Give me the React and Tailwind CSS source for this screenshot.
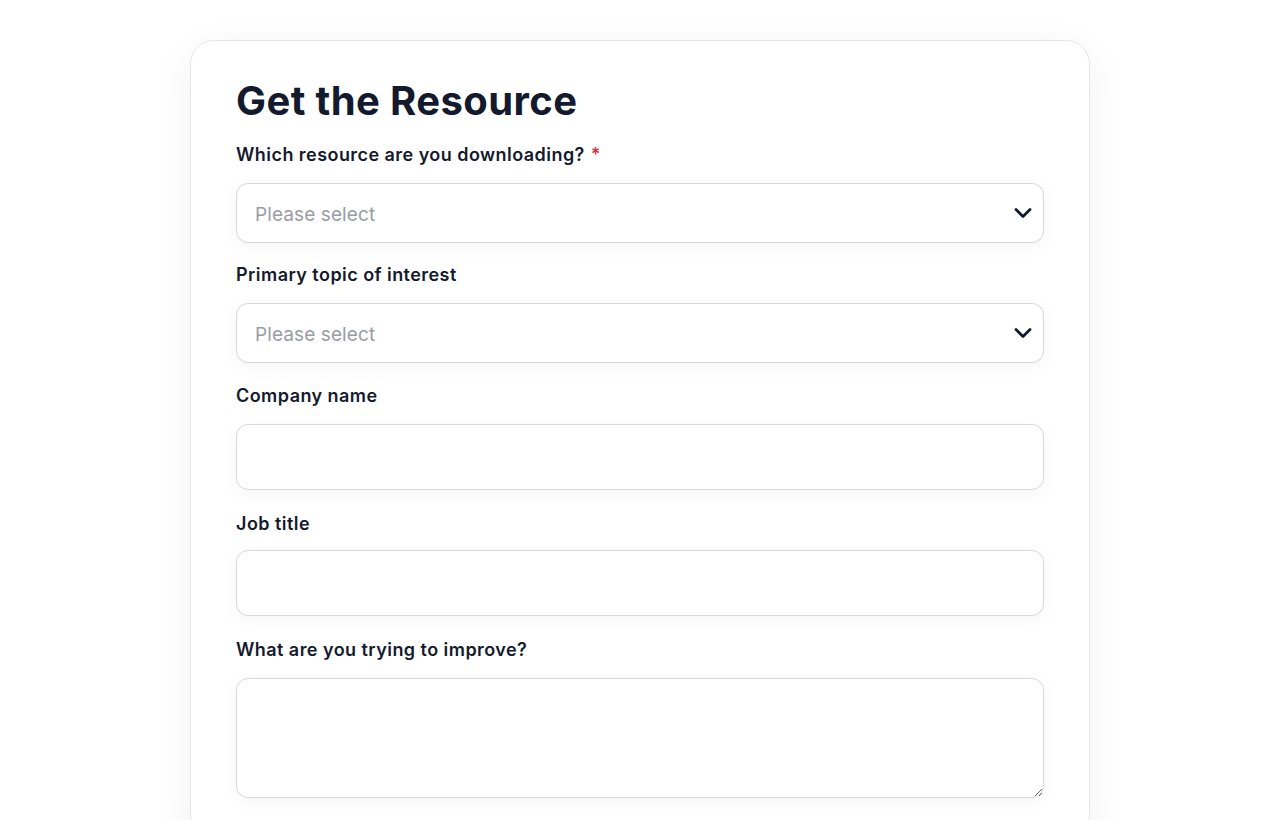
import { ChevronDown } from 'lucide-react'

const font = { fontFamily: 'Inter, "Noto Sans", Arial, sans-serif' }

function Label({ children, required }) {
  return (
    <label className="block text-[18px] font-semibold leading-[27px] tracking-[0.45px] text-[#141a2e]">
      {children}
      {required ? <span className="ml-1.5 text-[#e0313f]">*</span> : null}
    </label>
  )
}

function SelectBox() {
  return (
    <div className="mt-[15px] flex h-[60px] items-center justify-between rounded-[12px] border border-[#d5d8df] bg-white pl-[18px] pr-[6px] shadow-[0_4px_18px_rgba(20,26,46,0.04)]">
      <span className="pt-[4px] text-[19px] tracking-[0.1px] text-[#9a9ca5]">Please select</span>
      <ChevronDown size={28} strokeWidth={2.4} className="text-[#141a2e]" />
    </div>
  )
}

function TextBox({ className = '' }) {
  return (
    <div
      className={`rounded-[12px] border border-[#d5d8df] bg-white shadow-[0_4px_18px_rgba(20,26,46,0.04)] ${className}`}
    />
  )
}

export default function App() {
  return (
    <div style={font} className="min-h-screen bg-white pt-10">
      <div className="mx-auto w-[900px] rounded-[24px] border border-[#e6e7eb] bg-white px-[45px] pb-10 pt-[36px] shadow-[0_10px_40px_rgba(20,26,46,0.06)]">
        <h1 className="text-[40px] font-bold leading-[48px] tracking-[0.4px] text-[#141a2e]">
          Get the Resource
        </h1>

        <div className="mt-[16px]">
          <Label required>Which resource are you downloading?</Label>
          <SelectBox />
        </div>

        <div className="mt-[18px]">
          <Label>Primary topic of interest</Label>
          <SelectBox />
        </div>

        <div className="mt-[19px]">
          <Label>Company name</Label>
          <TextBox className="mt-[15px] h-[66px]" />
        </div>

        <div className="mt-[20px]">
          <Label>Job title</Label>
          <TextBox className="mt-[13px] h-[66px]" />
        </div>

        <div className="mt-[20px]">
          <Label>What are you trying to improve?</Label>
          <textarea className="mt-[15px] block h-[120px] w-full rounded-[12px] border border-[#d5d8df] bg-white shadow-[0_4px_18px_rgba(20,26,46,0.04)] outline-none" />
        </div>
      </div>
    </div>
  )
}
